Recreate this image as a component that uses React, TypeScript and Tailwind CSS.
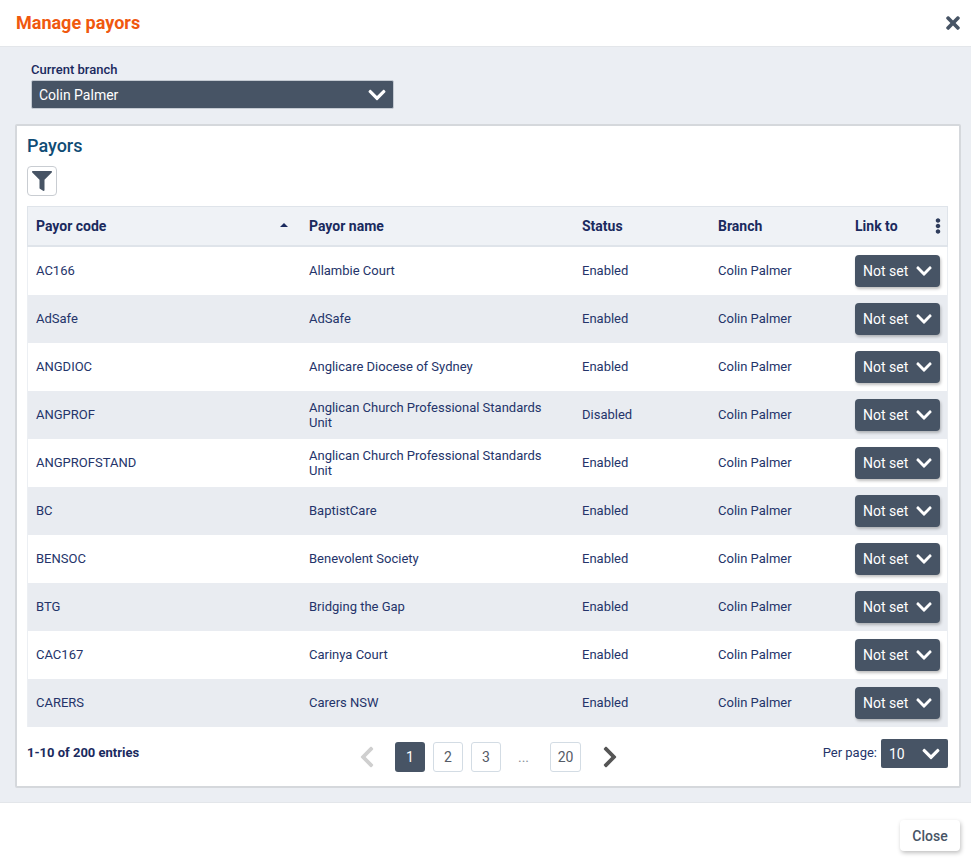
import React from "react";
import { FaChevronDown, FaChevronLeft, FaChevronRight, FaEllipsisV, FaFilter, FaTimes } from "react-icons/fa";

const rows = [
  { code: "AC166", name: "Allambie Court", status: "Enabled" },
  { code: "AdSafe", name: "AdSafe", status: "Enabled" },
  { code: "ANGDIOC", name: "Anglicare Diocese of Sydney", status: "Enabled" },
  { code: "ANGPROF", name: "Anglican Church Professional Standards Unit", status: "Disabled" },
  { code: "ANGPROFSTAND", name: "Anglican Church Professional Standards Unit", status: "Enabled" },
  { code: "BC", name: "BaptistCare", status: "Enabled" },
  { code: "BENSOC", name: "Benevolent Society", status: "Enabled" },
  { code: "BTG", name: "Bridging the Gap", status: "Enabled" },
  { code: "CAC167", name: "Carinya Court", status: "Enabled" },
  { code: "CARERS", name: "Carers NSW", status: "Enabled" },
];

const cols = "grid grid-cols-[273px_273px_136px_137px_102px] items-center";

function PageButton({ label, active, wide }: { label: string; active?: boolean; wide?: boolean }) {
  return (
    <div
      className={
        active
          ? "flex h-[30px] w-[30px] items-center justify-center rounded-[3px] bg-[#475465] text-sm text-white"
          : `flex h-[30px] ${wide ? "w-[31px]" : "w-[30px]"} items-center justify-center rounded-[3px] border border-[#d3dce4] bg-white text-sm text-[#555b66]`
      }
    >
      {label}
    </div>
  );
}

export default function App() {
  return (
    <div className="flex h-[865px] w-[971px] flex-col overflow-hidden bg-white font-['Roboto',sans-serif] text-[#1a2a5e]">
      {/* Header */}
      <div className="flex h-[47px] shrink-0 items-center justify-between border-b border-[#e3e6ea] pl-4 pr-[11px]">
        <h1 className="text-lg font-bold text-[#f0580f]">Manage payors</h1>
        <FaTimes className="h-[20px] w-[14px] text-[#475465]" />
      </div>

      {/* Body */}
      <div className="flex h-[756px] shrink-0 flex-col border-b border-[#e3e6ea] bg-[#ebeef3] px-[15px] pt-4">
        <div className="pl-4">
          <div className="text-[13px] font-medium leading-[14px]">Current branch</div>
          <div className="mt-[3px] flex h-[29px] w-[363px] items-center justify-between rounded-[2px] border border-[#c4cad2] bg-[#475465] pl-[7px] pr-[7px] text-sm text-white">
            <span>Colin Palmer</span>
            <FaChevronDown className="h-[20px] w-[18px]" />
          </div>
        </div>

        <div className="mt-[15px] h-[664px] w-[946px] rounded-[2px] border-2 border-[#d5d8dc] bg-white px-[10px] pt-[10px]">
          <h2 className="text-lg font-medium leading-[20px] text-[#0f4c75]">Payors</h2>
          <div className="mt-[10px] flex h-[30px] w-[30px] items-center justify-center rounded-[4px] border border-[#c9cdd2] bg-white">
            <FaFilter className="h-[20px] w-[20px] text-[#475465]" />
          </div>

          {/* Table */}
          <div className="mt-[10px] w-[921px]">
            <div className={`${cols} h-[41px] border-y border-b-2 border-[#dfe4ea] bg-[#eff2f6] text-sm font-bold shadow-[inset_1px_0_0_#dfe4ea,inset_-1px_0_0_#dfe4ea]`}>
              <div className="flex items-center justify-between pl-[9px] pr-[12px]">
                <span>Payor code</span>
                <span className="mb-[3px] h-0 w-0 border-x-[4px] border-b-[4px] border-x-transparent border-b-[#1a2a5e]" />
              </div>
              <div className="pl-[9px]">Payor name</div>
              <div className="pl-[9px]">Status</div>
              <div className="pl-[9px]">Branch</div>
              <div className="flex items-center justify-between pl-[9px] pr-[7px]">
                <span>Link to</span>
                <FaEllipsisV className="mb-[1px] h-[16px] w-[6px] text-[#2f3d5c]" />
              </div>
            </div>

            {rows.map((row, i) => (
              <div
                key={row.code}
                className={`${cols} h-[48px] text-[13px] text-[#24346a] shadow-[inset_1px_0_0_#eceff3,inset_-1px_0_0_#eceff3] ${i % 2 === 0 ? "bg-white" : "bg-[#e9ecf1]"}`}
              >
                <div className="pl-[9px]">{row.code}</div>
                <div className={`pl-[9px] pr-[20px] leading-[15px] ${row.name.length < 40 ? "pb-[2px]" : ""}`}>{row.name}</div>
                <div className="pl-[9px]">{row.status}</div>
                <div className="pl-[9px]">Colin Palmer</div>
                <div className="pl-[9px]">
                  <div className="flex h-[32px] w-[85px] items-center justify-between rounded-[4px] bg-[#475465] pl-[8px] pr-[8px] text-sm text-white shadow-[1px_2px_3px_rgba(0,0,0,0.25)]">
                    <span>Not set</span>
                    <FaChevronDown className="h-[18px] w-[16px]" />
                  </div>
                </div>
              </div>
            ))}
          </div>

          {/* Pagination */}
          <div className="flex h-[59px] w-[921px] items-start">
            <div className="w-[332px] pt-[16px] text-[13px] font-bold leading-[20px]">1-10 of 200 entries</div>
            <div className="flex items-center pt-[15px]">
              <FaChevronLeft className="mr-[20px] h-[24px] w-[16px] text-[#cfcfcf]" />
              <div className="flex items-center gap-[8px]">
                <PageButton label="1" active />
                <PageButton label="2" />
                <PageButton label="3" />
                <div className="flex h-[30px] w-[33px] items-center justify-center pr-[4px] text-sm text-[#8a8f98]">...</div>
                <PageButton label="20" wide />
              </div>
              <FaChevronRight className="ml-[21px] h-[24px] w-[16px] text-[#555555]" />
            </div>
            <div className="ml-auto flex items-center pt-[12px] text-[13px] text-[#24346a]">
              <span className="mb-[2px] mr-[4px]">Per page:</span>
              <div className="flex h-[29px] w-[67px] items-center justify-between rounded-[2px] bg-[#475465] pl-[8px] pr-[8px] text-sm text-white">
                <span>10</span>
                <FaChevronDown className="h-[20px] w-[18px]" />
              </div>
            </div>
          </div>
        </div>
      </div>

      {/* Footer */}
      <div className="flex flex-1 items-start justify-end pr-[11px] pt-[17px]">
        <div className="flex h-[31px] w-[60px] items-center justify-center rounded-[4px] bg-white text-sm font-medium text-[#475465] shadow-[1px_2px_4px_rgba(0,0,0,0.25)]">
          Close
        </div>
      </div>
    </div>
  );
}
